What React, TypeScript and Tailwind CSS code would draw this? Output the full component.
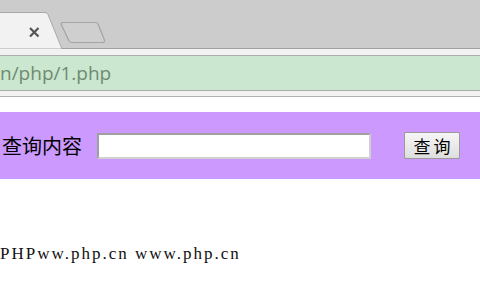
import React from "react";

const CJK = "font-['SimSun','Noto_Sans_CJK_SC',sans-serif]";

export default function App() {
  return (
    <div className="w-[480px] h-[300px] overflow-hidden bg-white">
      {/* tab strip */}
      <div className="relative h-[49px] bg-[#cccccc]">
        <svg className="absolute left-0 top-0" width="480" height="49" viewBox="0 0 480 49">
          <path d="M-2 12.5 H45 Q47 12.5 48 14.5 L62 49 H-2 Z" fill="#f2f2f2" stroke="#a8a8a8" strokeWidth="1" />
          <path d="M62 48.5 H480" stroke="#a0a0a0" strokeWidth="1" />
          <path d="M63 22.5 H95 Q97 22.5 98 24 L104.5 40 Q105 42.5 102.5 42.5 H72 Q70 42.5 69 41 L61.5 25 Q60.5 22.5 63 22.5 Z" fill="#cfcfcf" stroke="#a4a4a4" strokeWidth="1.2" />
          <path d="M30 28 L38.5 36.5 M38.5 28 L30 36.5" stroke="#555" strokeWidth="2.2" />
        </svg>
      </div>
      {/* toolbar */}
      <div className="h-[7px] bg-[#f2f2f2] border-b border-[#acacac]" />
      <div className="h-[35px] bg-[#cbe7cf] border-b border-[#acacac] flex items-center overflow-hidden">
        <span className="text-[19px] leading-none text-[#6f8a72] font-['Open_Sans','DejaVu_Sans',sans-serif] whitespace-nowrap">
          n/php/1.php
        </span>
      </div>
      <div className="h-[6px] bg-[#f2f2f2] border-b border-[#b0b0b0]" />

      {/* form */}
      <div className="mt-[15px] h-[67px] bg-[#cc99ff] flex items-center pl-[2px]">
        <span className={`text-[20px] leading-none text-black ${CJK}`}>查询内容</span>
        <input
          type="text"
          className="ml-[15px] w-[274px] h-[26px] bg-white border-2 border-t-[#a0a0a0] border-l-[#a0a0a0] border-r-[#d0d0d0] border-b-[#d0d0d0] outline-none"
        />
        <button
          className={`ml-[33px] w-[56px] h-[27px] rounded-[2px] border border-[#9a9a9a] bg-gradient-to-b from-[#f6f6f6] to-[#dedede] text-[17px] leading-none tracking-[3px] pl-[3px] text-black ${CJK}`}
        >
          查询
        </button>
      </div>

      <div className="mt-[66px] text-[17px] leading-none text-[#111] font-['Liberation_Serif',serif] tracking-[2px] whitespace-nowrap">
        PHPww.php.cn www.php.cn
      </div>
    </div>
  );
}
